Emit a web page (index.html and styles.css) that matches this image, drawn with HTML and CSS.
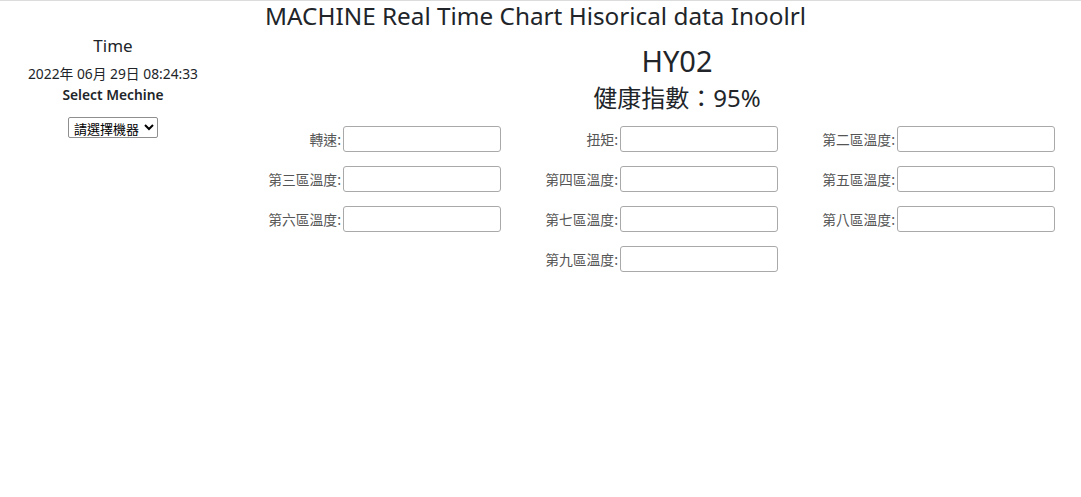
FILE: index.html
```html
<!DOCTYPE html>
<html lang="zh-Hant">
<head>
<meta charset="utf-8">
<title>MACHINE Real Time Chart</title>
<link rel="stylesheet" href="styles.css">
</head>
<body>
<div class="page">
  <h1 class="title">MACHINE Real Time Chart Hisorical data Inoolrl</h1>
  <div class="main">
    <aside class="side">
      <div class="time-label">Time</div>
      <div class="time-value">2022年 06月 29日 08:24:33</div>
      <div class="select-label">Select Mechine</div>
      <select class="machine-select">
        <option>請選擇機器</option>
      </select>
    </aside>
    <section class="content">
      <div class="machine-name">HY02</div>
      <div class="health">健康指數：95%</div>
      <div class="fields">
        <div class="field"><label>轉速:</label><input type="text"></div>
        <div class="field"><label>扭矩:</label><input type="text"></div>
        <div class="field"><label>第二區溫度:</label><input type="text"></div>
        <div class="field"><label>第三區溫度:</label><input type="text"></div>
        <div class="field"><label>第四區溫度:</label><input type="text"></div>
        <div class="field"><label>第五區溫度:</label><input type="text"></div>
        <div class="field"><label>第六區溫度:</label><input type="text"></div>
        <div class="field"><label>第七區溫度:</label><input type="text"></div>
        <div class="field"><label>第八區溫度:</label><input type="text"></div>
        <div class="field field-mid"><label>第九區溫度:</label><input type="text"></div>
      </div>
    </section>
  </div>
</div>
</body>
</html>
```
FILE: styles.css
```css
html, body {
  margin: 0;
  padding: 0;
  background: #fff;
}
body {
  font-family: "Noto Sans", "Noto Sans CJK TC", sans-serif;
  color: #212529;
  border-top: 1px solid #dcdcdc;
}
.page {
  width: 1081px;
}
.title {
  margin: 0;
  font-weight: 400;
  font-size: 24.3px;
  line-height: 30px;
  text-align: center;
  padding-right: 10px;
}
.main {
  display: flex;
}
.side {
  width: 226px;
  display: flex;
  flex-direction: column;
  align-items: center;
}
.time-label {
  font-size: 17px;
  line-height: 22px;
  margin-top: 4px;
}
.time-value {
  font-size: 13.8px;
  line-height: 20px;
  margin-top: 7px;
}
.select-label {
  font-size: 13.8px;
  font-weight: 600;
  line-height: 20px;
  margin-top: 1px;
}
.machine-select {
  margin-top: 12px;
  height: 21px;
  font-family: "Noto Sans CJK TC", sans-serif;
  font-size: 13px;
  padding: 0 1px;
  border: 1px solid #8f8f8f;
  border-radius: 2px;
  background: #fff;
  color: #000;
}
.content {
  flex: 1;
  display: flex;
  flex-direction: column;
}
.machine-name, .health {
  text-align: center;
  padding-left: 47px;
}
.machine-name {
  font-size: 29px;
  line-height: 36px;
  margin-top: 12px;
}
.health {
  font-size: 24px;
  line-height: 32px;
  margin-top: 3px;
  font-family: "Noto Sans", "Noto Sans CJK TC", sans-serif;
}
.fields {
  display: grid;
  grid-template-columns: repeat(3, 277px);
  row-gap: 14px;
  margin-top: 12px;
}
.field {
  display: flex;
  justify-content: flex-end;
  align-items: center;
  padding-right: 2px;
}
.field-mid {
  grid-column: 2;
}
.field label {
  font-family: "Noto Sans CJK TC", sans-serif;
  font-size: 13.8px;
  color: #555;
}
.field input {
  width: 158px;
  height: 26px;
  box-sizing: border-box;
  border: 1px solid #a9a9a9;
  border-radius: 3px;
  margin-left: 2px;
}
```
